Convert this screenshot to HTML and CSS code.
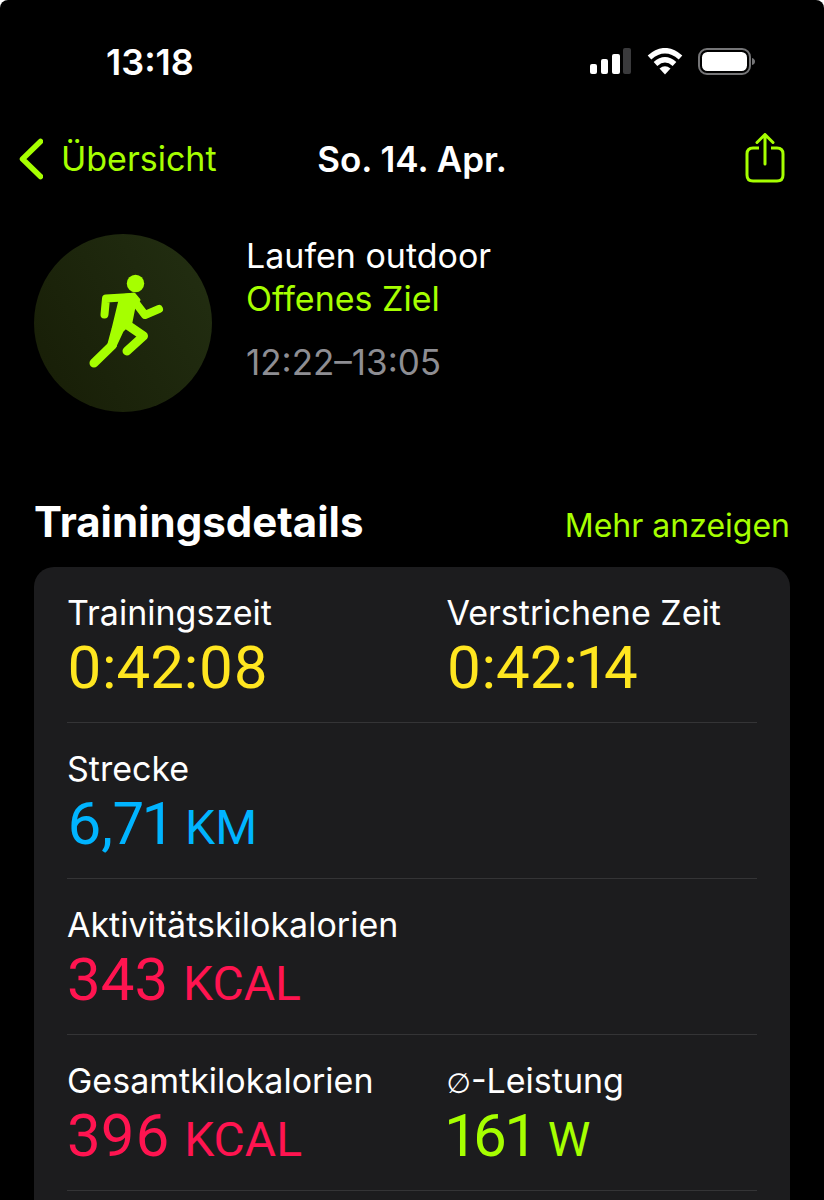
FILE: index.html
```
<!DOCTYPE html>
<html lang="de">
<head>
    <meta charset="UTF-8">
    <meta name="viewport" content="width=device-width, initial-scale=1.0">
    <title>Trainingsdetails</title>
    <link rel="stylesheet" href="styles.css">
</head>
<body>
    <div class="screen">
        <div class="status-bar">
            <time>13:18</time>
            <div class="status-icons">
                <svg width="42" height="28" viewBox="0 0 42 28" fill="#fff" aria-hidden="true">
                    <rect x="0" y="16" width="7" height="10" rx="2"/>
                    <rect x="11" y="11" width="7" height="15" rx="2"/>
                    <rect x="22" y="6" width="8" height="20" rx="2"/>
                    <rect x="33" y="0" width="8" height="26" rx="2" fill="#3a3a3c"/>
                </svg>
                <svg width="36" height="28" viewBox="0 0 36 28" aria-hidden="true">
                    <path d="M2.500 9.500Q18 -4 33.500 9.500" fill="none" stroke="#fff" stroke-width="5.500"/>
                    <path d="M8.500 16Q18 7.500 27.500 16" fill="none" stroke="#fff" stroke-width="5.500"/>
                    <path d="M18 26.500L12.500 20.500Q18 16 23.500 20.500Z" fill="#fff"/>
                </svg>
                <svg width="58" height="28" viewBox="0 0 58 28" aria-hidden="true">
                    <rect x="1" y="1" width="51" height="25" rx="8" fill="none" stroke="#757577" stroke-width="2"/>
                    <rect x="4" y="4" width="45" height="19" rx="5.500" fill="#fff"/>
                    <path d="M54 10Q57 11 57 13.500T54 17Z" fill="#757577"/>
                </svg>
            </div>
        </div>

        <header class="nav-bar">
            <a class="back" href="#">
                <svg width="25" height="42" viewBox="0 0 25 42" aria-hidden="true">
                    <path d="M22.500 3.500L4.500 21L22.500 38.500" fill="none" stroke="currentColor" stroke-width="5.500" stroke-linecap="round" stroke-linejoin="round"/>
                </svg>
                Übersicht
            </a>
            <h1>So. 14. Apr.</h1>
            <button class="share" type="button" aria-label="Teilen">
                <svg width="40" height="52" viewBox="0 0 40 52" fill="none" stroke="currentColor" stroke-width="3" stroke-linecap="round" stroke-linejoin="round">
                    <path d="M14 15H8Q2 15 2 21V42Q2 48 8 48H32Q38 48 38 42V21Q38 15 32 15H26" stroke-linecap="butt"/>
                    <path d="M20 31V2M12 9.500L20 1.500L28 9.500"/>
                </svg>
            </button>
        </header>

        <section class="workout">
            <div class="workout-icon">
                <svg width="178" height="178" viewBox="0 0 178 178" fill="none" stroke="#a6ff00" stroke-linecap="round" stroke-linejoin="round" aria-hidden="true">
                    <circle cx="101.500" cy="49.500" r="8.700" fill="#a6ff00" stroke="none"/>
                    <path d="M70.500 80.500L72 64.500L97 63" stroke-width="8"/>
                    <path d="M98 64L111 81L125 75" stroke-width="8"/>
                    <path d="M92 90L109.500 102L93 117" stroke-width="9"/>
                    <path d="M87 62L100 60L105 66L100 73L97 88L88 97L81 112L75 110L79 95Z" fill="#a6ff00" stroke-width="3"/>
                    <path d="M78.500 111L60 129" stroke-width="9"/>
                </svg>
            </div>
            <div class="workout-info">
                <h2>Laufen outdoor</h2>
                <p class="goal">Offenes Ziel</p>
                <p class="period">12:22–13:05</p>
            </div>
        </section>

        <div class="section-head">
            <h2>Trainingsdetails</h2>
            <a href="#">Mehr anzeigen</a>
        </div>

        <div class="card">
            <dl class="row">
                <div>
                    <dt>Trainingszeit</dt>
                    <dd class="time">0:42:08</dd>
                </div>
                <div>
                    <dt>Verstrichene Zeit</dt>
                    <dd class="time">0:42:14</dd>
                </div>
            </dl>
            <dl class="row">
                <div>
                    <dt>Strecke</dt>
                    <dd class="distance">6,71 <span class="unit">KM</span></dd>
                </div>
            </dl>
            <dl class="row">
                <div>
                    <dt>Aktivitätskilokalorien</dt>
                    <dd class="energy">343 <span class="unit">KCAL</span></dd>
                </div>
            </dl>
            <dl class="row">
                <div>
                    <dt>Gesamtkilokalorien</dt>
                    <dd class="energy">396 <span class="unit">KCAL</span></dd>
                </div>
                <div>
                    <dt><span class="average">∅</span>-Leistung</dt>
                    <dd class="power">161 <span class="unit">W</span></dd>
                </div>
            </dl>
        </div>
    </div>
</body>
</html>
```
FILE: styles.css
```
* {
    box-sizing: border-box;
}

html {
    background: #fff;
}

body {
    margin: 0;
    font-family: Inter, "Liberation Sans", sans-serif;
    font-size: 34px;
    line-height: 42px;
    color: #fff;
}

h1, h2, p, dl, dd {
    margin: 0;
}

a {
    color: #a6ff00;
    text-decoration: none;
}

.screen {
    display: flex;
    flex-direction: column;
    min-height: 100vh;
    background: #000;
    border-radius: 8px 8px 0 0;
}

.status-bar {
    display: flex;
    justify-content: space-between;
    align-items: center;
    padding: 41px 68px 0 106px;
    font-size: 36px;
    font-weight: 600;
}

.status-icons {
    display: flex;
    gap: 15px;
}

.nav-bar {
    display: grid;
    grid-template-columns: 1fr auto 1fr;
    align-items: center;
    padding: 50px 18px 0;
}

.back {
    display: flex;
    align-items: center;
    gap: 18px;
}

.nav-bar h1 {
    font-size: 35px;
    font-weight: 600;
}

.share {
    justify-self: end;
    display: block;
    margin-right: 21px;
    padding: 0;
    border: 0;
    background: none;
    color: #a6ff00;
}

.share svg {
    display: block;
}

.workout {
    display: flex;
    gap: 34px;
    padding: 49px 34px 0;
}

.workout-icon {
    width: 178px;
    height: 178px;
    border-radius: 50%;
    background: linear-gradient(60deg, #171d06, #232f12);
}

.workout-info {
    padding-top: 1px;
}

.workout-info h2 {
    font-size: 34px;
    font-weight: 400;
}

.goal {
    line-height: 44px;
    color: #a6ff00;
}

.period {
    margin-top: 20px;
    font-size: 35px;
    color: #8e8e93;
}

.section-head {
    display: flex;
    justify-content: space-between;
    align-items: baseline;
    padding: 84px 34px 0;
}

.section-head h2 {
    font-size: 42px;
    line-height: 52px;
    font-weight: 700;
}

.section-head a {
    font-size: 32px;
}

.card {
    flex: 1;
    margin: 19px 34px 0;
    padding: 0 33px;
    background: #1c1c1e;
    border-radius: 20px 20px 0 0;
}

.row {
    display: grid;
    grid-template-columns: 55% 45%;
    padding: 25px 0 21px;
    border-bottom: 1px solid #343436;
}

.row dd {
    font-family: Roboto, "Liberation Sans", sans-serif;
    font-size: 60px;
    line-height: 67px;
    font-variant-numeric: proportional-nums;
}

.row .unit {
    font-size: 48px;
    line-height: 1;
}

.average {
    font-family: "DejaVu Sans", sans-serif;
    font-size: 28px;
    line-height: 1;
}

.time {
    color: #ffe620;
}

.distance {
    color: #00b4ff;
}

.energy {
    color: #ff1450;
}

.power {
    color: #a6ff00;
}
```
